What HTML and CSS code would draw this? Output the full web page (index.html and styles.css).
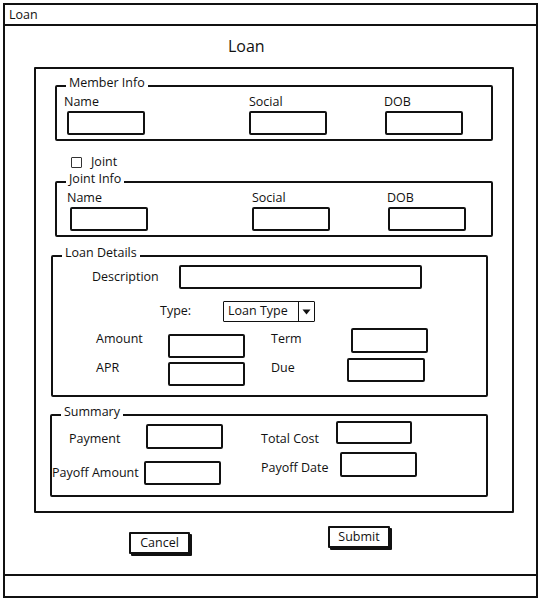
FILE: index.html
```html
<!DOCTYPE html>
<html>
<head>
<meta charset="utf-8">
<title>Loan</title>
<link rel="stylesheet" href="styles.css">
</head>
<body>
<div class="window">
  <div class="titlebar">Loan</div>
  <div class="main">
    <h1 class="heading">Loan</h1>
    <div class="panel">
      <div class="group group-member">
        <span class="legend">Member Info</span>
        <div class="fields">
          <div class="field field-1"><span class="lbl">Name</span><span class="input shift"></span></div>
          <div class="field field-2"><span class="lbl">Social</span><span class="input"></span></div>
          <div class="field"><span class="lbl">DOB</span><span class="input nudge"></span></div>
        </div>
      </div>

      <div class="check-row"><span class="checkbox"></span><span class="lbl">Joint</span></div>

      <div class="group group-joint">
        <span class="legend">Joint Info</span>
        <div class="fields">
          <div class="field field-1"><span class="lbl">Name</span><span class="input shift"></span></div>
          <div class="field field-2"><span class="lbl">Social</span><span class="input"></span></div>
          <div class="field"><span class="lbl">DOB</span><span class="input nudge"></span></div>
        </div>
      </div>

      <div class="group group-loan">
        <span class="legend">Loan Details</span>
        <div class="row row-desc">
          <span class="lbl lbl-desc">Description</span>
          <span class="input input-wide"></span>
        </div>
        <div class="row row-type">
          <span class="lbl lbl-type">Type:</span>
          <div class="select">
            <span class="select-text">Loan Type</span>
            <span class="select-btn"><svg width="9" height="6" viewBox="0 0 9 6"><path d="M0.5 0.5 H8.5 L4.5 5.5 Z" fill="#111"/></svg></span>
          </div>
        </div>
        <div class="row row-amount">
          <span class="lbl lbl-left lbl-amount">Amount</span>
          <span class="input input-amount"></span>
          <span class="lbl lbl-right lbl-term">Term</span>
          <span class="input input-term"></span>
        </div>
        <div class="row row-apr">
          <span class="lbl lbl-left lbl-apr">APR</span>
          <span class="input input-apr"></span>
          <span class="lbl lbl-right lbl-due">Due</span>
          <span class="input"></span>
        </div>
      </div>

      <div class="group group-summary">
        <span class="legend">Summary</span>
        <div class="row row-sum1">
          <span class="lbl lbl-payment">Payment</span>
          <span class="input input-payment"></span>
          <span class="lbl lbl-total">Total Cost</span>
          <span class="input input-total"></span>
        </div>
        <div class="row row-sum2">
          <span class="lbl lbl-payoff">Payoff Amount</span>
          <span class="input input-payoff"></span>
          <span class="lbl lbl-date">Payoff Date</span>
          <span class="input input-date"></span>
        </div>
      </div>
    </div>

    <div class="actions">
      <button class="btn btn-cancel">Cancel</button>
      <button class="btn btn-submit">Submit</button>
    </div>
  </div>
  <div class="footer"></div>
</div>
</body>
</html>
```

FILE: styles.css
```css
* { box-sizing: border-box; }

body {
  margin: 0;
  background: #fff;
  color: #111;
  font-family: "Open Sans", "DejaVu Sans", sans-serif;
  font-size: 12.5px;
}

.window {
  margin: 3px 0 0 3px;
  width: 535px;
  height: 595px;
  border: 2px solid #111;
  display: flex;
  flex-direction: column;
}

.titlebar {
  height: 21px;
  border-bottom: 2px solid #111;
  padding-left: 4px;
  line-height: 19px;
}

.main { flex: 1; }

.footer {
  height: 22px;
  border-top: 2px solid #111;
}

.heading {
  margin: 10px 0 0 223px;
  font-size: 16px;
  font-weight: normal;
  line-height: 20px;
}

.panel {
  margin: 11px 0 0 29px;
  width: 480px;
  height: 446px;
  border: 2px solid #111;
  border-radius: 1px;
}

.group {
  position: relative;
  border: 2px solid #111;
  border-radius: 2px;
}

.legend {
  position: absolute;
  top: -11px;
  left: 9px;
  padding: 0 3px;
  background: #fff;
  line-height: 14px;
  white-space: nowrap;
}

.lbl { line-height: 14px; white-space: nowrap; }

.input {
  display: block;
  width: 78px;
  height: 24px;
  border: 2px solid #111;
  border-radius: 2px;
  background: #fff;
}

/* member / joint */
.group-member { margin: 16px 0 0 19px; width: 438px; height: 56px; }
.group-joint { margin: 13px 0 0 19px; width: 438px; height: 56px; }

.fields { display: flex; padding: 8px 0 0 7px; }
.group-joint .fields { padding-left: 10px; }

.field { display: flex; flex-direction: column; gap: 2px; }
.field-1 { width: 185px; }
.field-2 { width: 135px; }
.input.shift { margin-left: 3px; }
.input.nudge { margin-left: 1px; }

.check-row {
  display: flex;
  align-items: center;
  gap: 9px;
  height: 12px;
  margin: 15px 0 0 35px;
}

.checkbox {
  display: block;
  width: 11px;
  height: 11px;
  border: 1.5px solid #333;
  border-radius: 1px;
}

/* loan details */
.group-loan { margin: 18px 0 0 15px; width: 437px; height: 142px; }

.row { display: flex; align-items: flex-start; }

.row-desc { margin-top: 8px; }
.lbl-desc { margin: 5px 0 0 39px; width: 87px; }
.input-wide { width: 243px; }

.row-type { margin-top: 12px; }
.lbl-type { margin: 3px 0 0 107px; width: 63px; }

.select {
  display: flex;
  width: 92px;
  height: 21px;
  border: 1.5px solid #111;
  border-radius: 1px;
}
.select-text {
  width: 75px;
  padding-left: 4px;
  line-height: 18px;
  border-right: 1.5px solid #111;
  white-space: nowrap;
}
.select-btn {
  flex: 1;
  display: flex;
  align-items: center;
  justify-content: center;
}

.row-amount { margin-top: 6px; }
.lbl-left { margin-left: 43px; width: 72px; }
.lbl-amount { margin-top: 4px; }
.input-amount { width: 77px; margin-top: 6px; }
.lbl-right { margin-left: 26px; }
.lbl-term { margin-top: 4px; width: 80px; }
.input-term { width: 77px; height: 25px; }

.lbl-apr { margin-top: 3px; }
.input-apr { width: 77px; margin-top: 4px; }
.lbl-due { margin-top: 3px; width: 76px; }

/* summary */
.group-summary { margin: 17px 0 0 14px; width: 438px; height: 83px; }

.row-sum1 { margin-top: 5px; }
.lbl-payment { margin: 11px 0 0 17px; width: 77px; }
.input-payment { width: 77px; height: 25px; margin-top: 3px; }
.lbl-total { margin: 11px 0 0 38px; width: 75px; }
.input-total { width: 76px; height: 23px; }

.row-sum2 { margin-top: 3px; }
.lbl-payoff { margin-top: 14px; width: 92px; }
.input-payoff { width: 77px; margin-top: 9px; }
.lbl-date { margin: 9px 0 0 40px; width: 79px; }
.input-date { width: 77px; height: 25px; }

/* buttons */
.actions {
  display: flex;
  align-items: flex-start;
  margin: 13px 0 0 124px;
}

.btn {
  padding: 0;
  background: #fff;
  color: #111;
  font-family: inherit;
  font-size: 12.5px;
  border: 2px solid #111;
  border-radius: 1px;
  box-shadow: 2px 2px 0 #111;
  line-height: 18px;
}

.btn-cancel { width: 61px; height: 22px; margin-top: 6px; }
.btn-submit { width: 62px; height: 22px; margin-left: 138px; }
```
